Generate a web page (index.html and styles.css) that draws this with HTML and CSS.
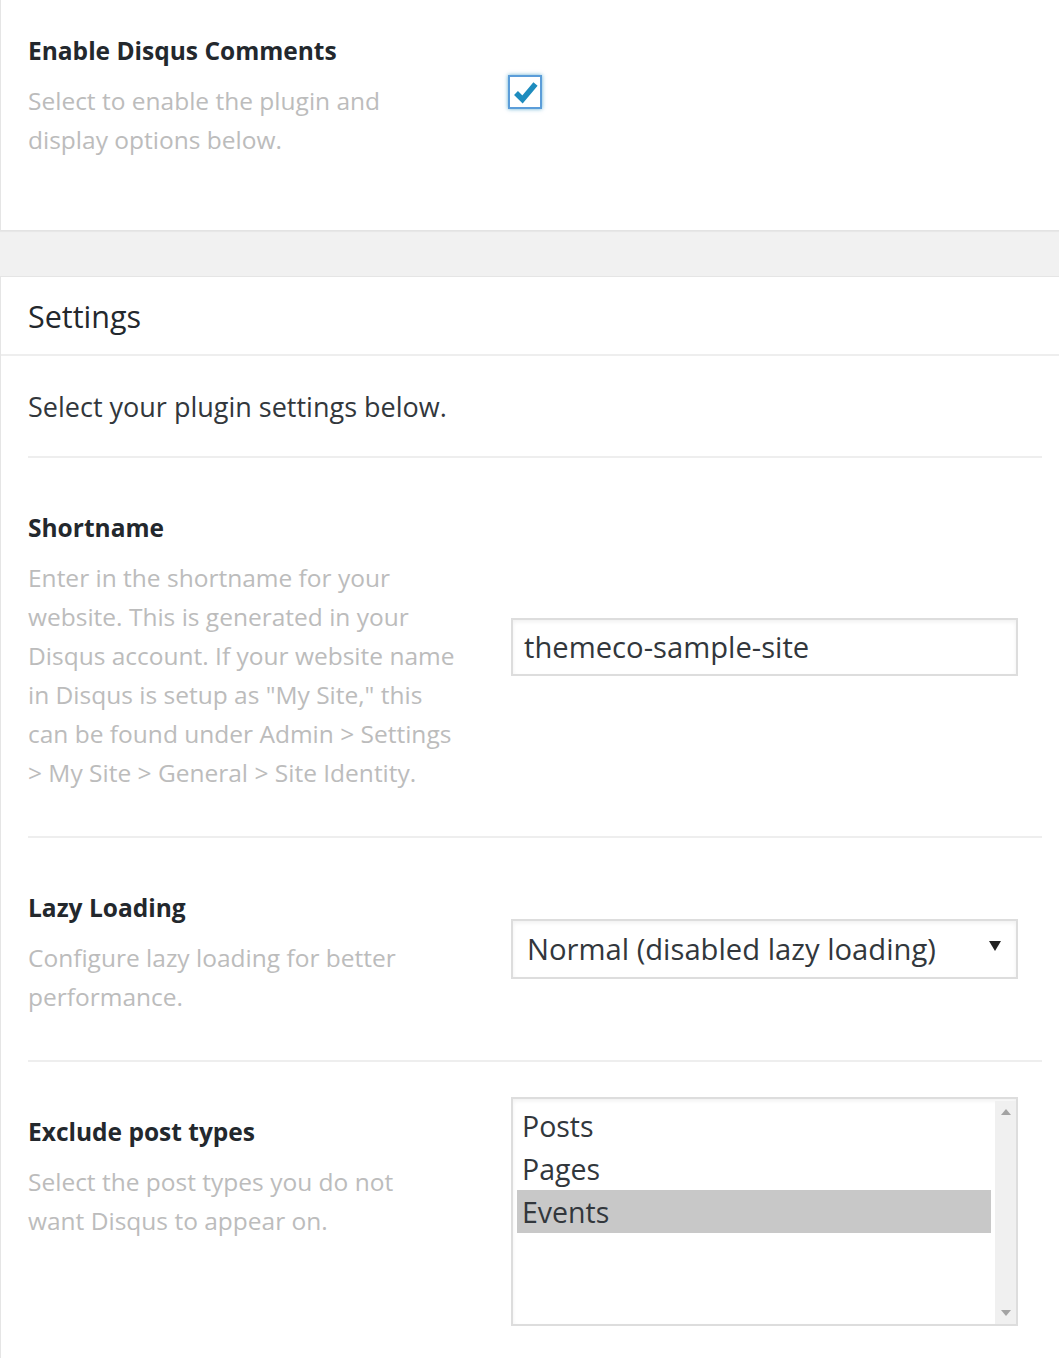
FILE: index.html
```html
<!DOCTYPE html>
<html lang="en">
<head>
<meta charset="utf-8">
<title>Disqus Settings</title>
<link rel="stylesheet" href="styles.css">
</head>
<body>
<div class="panel panel-top">
  <div class="row row-top">
    <div class="th">
      <div class="label">Enable Disqus Comments</div>
      <p class="desc desc-narrow">Select to enable the plugin and display options below.</p>
    </div>
    <div class="td td-check">
      <span class="checkbox">
        <svg width="30" height="30" viewBox="0 0 30 30"><path d="M6 16 L12.5 22.5 L25.5 7" fill="none" stroke="#1e8cbe" stroke-width="5.5" stroke-linecap="butt" stroke-linejoin="miter"/></svg>
      </span>
    </div>
  </div>
</div>

<div class="band"></div>

<div class="panel panel-settings">
  <div class="panel-head"><h2 class="title">Settings</h2></div>
  <div class="panel-body">
    <p class="intro">Select your plugin settings below.</p>

    <div class="row">
      <div class="th">
        <div class="label">Shortname</div>
        <p class="desc">Enter in the shortname for your website. This is generated in your Disqus account. If your website name in Disqus is setup as "My Site," this can be found under Admin &gt; Settings &gt; My Site &gt; General &gt; Site Identity.</p>
      </div>
      <div class="td td-mid">
        <div class="field">themeco-sample-site</div>
      </div>
    </div>

    <div class="row">
      <div class="th">
        <div class="label">Lazy Loading</div>
        <p class="desc">Configure lazy loading for better performance.</p>
      </div>
      <div class="td td-mid">
        <div class="field select">
          <span>Normal (disabled lazy loading)</span>
          <svg class="caret" width="14" height="12" viewBox="0 0 14 12"><path d="M1 1 H13 L7 11 Z" fill="#222"/></svg>
        </div>
      </div>
    </div>

    <div class="row">
      <div class="th">
        <div class="label">Exclude post types</div>
        <p class="desc desc-narrow">Select the post types you do not want Disqus to appear on.</p>
      </div>
      <div class="td td-multi">
        <div class="multi">
          <div class="options">
            <div class="opt">Posts</div>
            <div class="opt">Pages</div>
            <div class="opt selected">Events</div>
          </div>
          <div class="scroll">
            <svg width="10" height="6" viewBox="0 0 10 6"><path d="M0 6 L5 0 L10 6 Z" fill="#a3a3a3"/></svg>
            <svg width="10" height="6" viewBox="0 0 10 6"><path d="M0 0 L10 0 L5 6 Z" fill="#a3a3a3"/></svg>
          </div>
        </div>
      </div>
    </div>
  </div>
</div>
</body>
</html>
```

FILE: styles.css
```css
html, body {
  margin: 0;
  padding: 0;
}
body {
  background: #f1f1f1;
  font-family: "Open Sans", "Noto Sans", sans-serif;
  color: #32373c;
  overflow: hidden;
  height: 1358px;
}
.panel {
  background: #fff;
  border-left: 1px solid #e5e5e5;
}
.panel-top {
  padding: 31px 17px 71px 27px;
  border-bottom: 1px solid #e3e3e3;
  box-shadow: 0 1px 1px rgba(0, 0, 0, 0.04);
}
.band {
  height: 45px;
}
.panel-settings {
  border-top: 1px solid #e5e5e5;
  min-height: 1100px;
}
.row {
  display: grid;
  grid-template-columns: 483px 507px;
  border-top: 2px solid #eeeeee;
}
.row-top {
  border-top: 0;
}
.th {
  padding: 50px 45px 44px 0;
}
.row-top .th {
  padding: 0 45px 0 0;
}
.label {
  font-size: 24.5px;
  line-height: 39px;
  font-weight: 700;
  color: #23282d;
}
.desc {
  margin: 11px 0 0;
  font-size: 24.5px;
  line-height: 39px;
  color: #bcbcbc;
}
.desc-narrow {
  max-width: 410px;
}
.td {
  padding: 35px 0;
}
.td-mid {
  align-self: center;
}
.td-multi {
  padding-top: 35px;
}
.td-check {
  padding: 44px 0 0;
}
.checkbox {
  display: flex;
  align-items: center;
  justify-content: center;
  width: 30px;
  height: 30px;
  margin-left: -3px;
  border: 2px solid #5b9dd9;
  box-shadow: 0 0 4px rgba(30, 140, 190, 0.7);
  background: #fff;
}
.panel-head {
  padding: 19px 27px 18px;
  border-bottom: 2px solid #eeeeee;
}
.title {
  margin: 0;
  font-size: 30.5px;
  line-height: 40px;
  font-weight: 400;
  color: #23282d;
}
.panel-body {
  padding: 31px 17px 0 27px;
}
.intro {
  margin: 0 0 29px;
  font-size: 27px;
  line-height: 40px;
  color: #32373c;
}
.field {
  box-sizing: border-box;
  width: 507px;
  height: 58px;
  border: 2px solid #dddddd;
  box-shadow: inset 0 2px 4px rgba(0, 0, 0, 0.06);
  padding: 0 12px 0 11px;
  display: flex;
  align-items: center;
  font-size: 29.2px;
  color: #32373c;
  background: #fff;
}
.select {
  height: 60px;
  padding: 0 14px 0 14px;
  justify-content: space-between;
}
.caret {
  margin-top: -6px;
}
.multi {
  box-sizing: border-box;
  width: 507px;
  height: 229px;
  border: 2px solid #dddddd;
  box-shadow: inset 0 2px 4px rgba(0, 0, 0, 0.06);
  display: flex;
  background: #fff;
}
.options {
  flex: 1;
  padding: 5px 4px 0 4px;
}
.opt {
  height: 43px;
  line-height: 44px;
  padding-left: 5px;
  font-size: 28.5px;
  color: #32373c;
}
.opt.selected {
  background: #c8c8c8;
}
.scroll {
  width: 21px;
  margin: 2px 0 0;
  background: #f0f0f0;
  display: flex;
  flex-direction: column;
  justify-content: space-between;
  align-items: center;
  padding: 8px 0 8px;
  box-sizing: border-box;
}
```
